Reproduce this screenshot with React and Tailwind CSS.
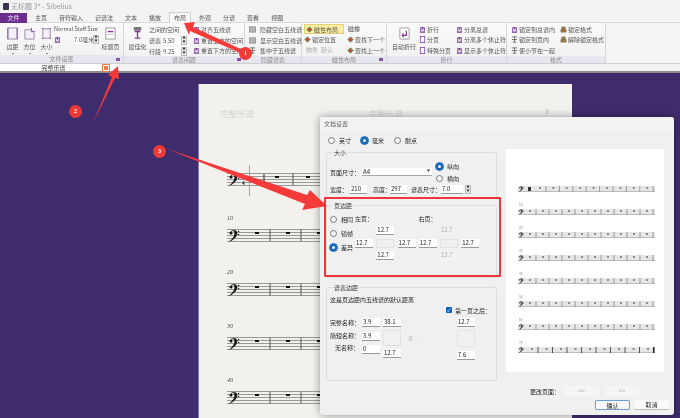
import React from 'react';

const FONT = '"Noto Sans CJK SC", "Noto Sans", sans-serif';

// little purple ribbon glyph, shape varies a bit by kind
const Glyph = ({ kind = 'a', className = 'w-[7px] h-[7px]' }) => (
  <svg viewBox="0 0 8 8" className={className + ' shrink-0'}>
    {kind === 'a' && <path d="M1 7h6M2 6V2h4v4M4 1v3" stroke="#7a3f98" strokeWidth="1.2" fill="none" />}
    {kind === 'b' && <rect x="1.5" y="0.5" width="5" height="7" fill="#fff" stroke="#8a4fa8" />}
    {kind === 'c' && <rect x="0.5" y="1" width="7" height="6" fill="#b4b4b4" stroke="#999" />}
    {kind === 'd' && <path d="M1 4l3-3 3 3-3 3z" fill="#d9433a" stroke="#3f9a45" />}
    {kind === 'e' && <path d="M2 1h4v3H2zM1 4h6v3H1z" fill="#a8772e" stroke="#6d6d6d" strokeWidth="0.6" />}
    {kind === 'f' && <path d="M1 1h6M4 1v6M2 7h4M1 4h6" stroke="#666" strokeWidth="1" fill="none" />}
  </svg>
);

const BigIcon = ({ kind }) => (
  <svg viewBox="0 0 14 14" className="w-[13px] h-[13px]">
    {kind === 'page' && <g><rect x="2" y="1" width="10" height="12" fill="#f4eef7" stroke="#9a8aa8" /><path d="M2 1v12M12 1v12" stroke="#8a4fa8" /></g>}
    {kind === 'fold' && <g><path d="M2 3h7l3 3v7H2z" fill="#f4eef7" stroke="#9a8aa8" /><path d="M9 1v4h4" stroke="#8a4fa8" fill="none" /></g>}
    {kind === 'size' && <g><rect x="3" y="2" width="8" height="10" fill="#f4eef7" stroke="#9a8aa8" /><path d="M3 1v1M11 1v1M3 12v1M11 12v1" stroke="#8a4fa8" strokeWidth="2" /></g>}
    {kind === 'title' && <g><rect x="2" y="1" width="10" height="12" fill="#fff" stroke="#9a9a9a" /><path d="M4 5h6" stroke="#8a2f9a" strokeWidth="1.4" /><path d="M4 8h6" stroke="#bbb" /></g>}
    {kind === 'opt' && <g><rect x="3" y="0" width="8" height="4" fill="#777" /><path d="M4 5h6M7 5v6M4 12h6" stroke="#8a2f9a" strokeWidth="1.4" /></g>}
    {kind === 'wrap' && <g><rect x="2" y="1" width="10" height="12" rx="1" fill="#fff" stroke="#9a9a9a" /><path d="M9 4v5H5M6 7L4.5 9 6 11" stroke="#8a2f9a" strokeWidth="1.2" fill="none" /></g>}
  </svg>
);

const BigBtn = ({ icon, label, arrow }) => (
  <div className="flex flex-col items-center w-[17px] pt-[3px]">
    <BigIcon kind={icon} />
    <span className="mt-[3px] whitespace-nowrap leading-[8px]">{label}</span>
    {arrow && <span className="mt-[2px] w-[2px] h-[1px] bg-[#888]" />}
  </div>
);

const RowItem = ({ kind, children, className = '' }) => (
  <div className={'flex items-center gap-[1px] h-[10.5px] whitespace-nowrap ' + className}>
    <Glyph kind={kind} />
    <span>{children}</span>
  </div>
);

const Launcher = () => <span className="absolute right-[3px] bottom-[2px] w-[4px] h-[3px] bg-[#8a4fa8]" />;

const Group = ({ width, label, launcher, children, pl = 'pl-[4px]' }) => (
  <div className="relative flex flex-col shrink-0 border-r border-[#d4d6dc]" style={{ width }}>
    <div className={'flex h-[33px] bg-gradient-to-b from-[#fafafa] to-[#f2f2f3] pt-[1px] ' + pl}>{children}</div>
    <div className="h-[8px] bg-[#e6e7ee] text-[#8a8a8a] text-center leading-[7px]">{label}</div>
    {launcher && <Launcher />}
  </div>
);

const Stepper = () => (
  <span className="w-[6px] h-[9px] bg-[#e8e8e8] border border-[#bbb] flex flex-col items-center justify-between text-[3px] leading-[3px] text-[#222]">
    <span>▲</span>
    <span>▼</span>
  </span>
);

const TABS = ['主页', '音符输入', '记谱法', '文本', '播放'];
const TABS2 = ['外观', '分谱', '查看', '视图'];

const Ribbon = () => (
  <div className="text-[6px] text-[#555] bg-[#f4f4f5]">
    <div className="flex h-[13px] items-center pl-[3px] gap-[2px] bg-[#f3f3f3] text-[#9a9a9a]">
      <span className="w-[6px] h-[7px] bg-[#3c2f52] rounded-[1px]" />
      <span className="text-[7px]">无标题 3* - Sibelius</span>
    </div>
    <div className="flex h-[10px] items-center bg-[#f3f3f3] text-[#555] leading-[8px]">
      <span className="w-[27px] h-[10px] bg-[#6b2c8c] text-[#e9def0] text-center leading-[9px]">文件</span>
      <div className="flex gap-[12px] pl-[8px]">
        {TABS.map((t) => <span key={t}>{t}</span>)}
      </div>
      <span className="ml-[8px] w-[22px] h-[11px] -mt-[1px] bg-[#f9f9f9] border border-b-0 border-[#d0d0d0] text-center leading-[10px] whitespace-nowrap">布局</span>
      <div className="flex gap-[12px] pl-[8px]">
        {TABS2.map((t) => <span key={t}>{t}</span>)}
      </div>
    </div>
    <div className="flex h-[41px] border-t border-[#d8d8d8] -mt-px">
      <Group width={124} label="文件设置" launcher>
        <div className="flex gap-0 pl-0">
          <BigBtn icon="page" label="边距" arrow />
          <BigBtn icon="fold" label="方位" arrow />
          <BigBtn icon="size" label="大小" arrow />
        </div>
        <div className="flex flex-col ml-[-1px] pt-[1px] w-[48px]">
          <span className="whitespace-nowrap leading-[9px] text-[5.5px]">Normal Staff Size</span>
          <div className="flex items-center mt-[1px]">
            <Glyph kind="a" />
            <span className="ml-[13px] w-[19px] bg-white text-center leading-[9px] whitespace-nowrap">7.0毫米</span>
            <Stepper />
          </div>
        </div>
        <BigBtn icon="title" label="标题页" />
      </Group>
      <Group width={121} label="谱表间距" launcher pl="pl-[5px]">
        <BigBtn icon="opt" label="最佳化" />
        <div className="flex flex-col ml-[3px] pt-[1px] gap-[2px] w-[44px]">
          <span className="leading-[9px]">之间的空间</span>
          {[['谱表', '5.50'], ['行段', '9.25']].map(([a, b]) => (
            <div key={a} className="flex items-center h-[9px]">
              <span className="w-[13px]">{a}</span>
              <span className="w-[19px] bg-white pl-[1px] leading-[9px]">{b}</span>
              <Stepper />
            </div>
          ))}
        </div>
        <div className="flex flex-col pt-[0.5px]">
          <RowItem kind="a">对齐五线谱</RowItem>
          <RowItem kind="a">重置上方的空间</RowItem>
          <RowItem kind="a">重置下方的空间</RowItem>
        </div>
      </Group>
      <Group width={57} label="隐藏谱表">
        <div className="flex flex-col pt-[0.5px]">
          <RowItem kind="c" className="gap-[4px]">隐藏空白五线谱</RowItem>
          <RowItem kind="c" className="gap-[4px]">显示空白五线谱</RowItem>
          <RowItem kind="f" className="gap-[4px]">集中于五线谱</RowItem>
        </div>
      </Group>
      <Group width={85} label="磁性布局" launcher pl="pl-[2px]">
        <div className="flex flex-col w-[43px]">
          <div className="flex items-center gap-[1px] h-[10px] w-[40px] bg-[#fdeea0] border border-[#e6cf7a] pl-[1px]">
            <Glyph kind="d" />
            <span className="whitespace-nowrap">磁性布局</span>
          </div>
          <RowItem kind="d">锁定位置</RowItem>
          <div className="flex items-center gap-[3px] h-[10px] text-[#aaa] pl-[2px] whitespace-nowrap">
            <span>物件</span>
            <span>默认</span>
          </div>
        </div>
        <div className="flex flex-col">
          <span className="h-[10.5px] pl-[1px] leading-[10px]">磁撞</span>
          <RowItem kind="d">查找下一个</RowItem>
          <RowItem kind="d">查找上一个</RowItem>
        </div>
      </Group>
      <Group width={120} label="折行" pl="pl-[5px]">
        <div className="w-[24px] flex justify-center">
          <BigBtn icon="wrap" label="自动折行" />
        </div>
        <div className="flex flex-col ml-[3px] w-[37px]">
          <RowItem kind="a">折行</RowItem>
          <RowItem kind="b">分页</RowItem>
          <RowItem kind="b">特殊分页</RowItem>
        </div>
        <div className="flex flex-col">
          <RowItem kind="a">分离总谱</RowItem>
          <RowItem kind="a">分离多个休止符</RowItem>
          <RowItem kind="a">显示多个休止符</RowItem>
        </div>
      </Group>
      <Group width={99} label="格式">
        <div className="flex flex-col w-[49px]">
          <RowItem kind="a">锁定到总谱内</RowItem>
          <RowItem kind="f">锁定到页内</RowItem>
          <RowItem kind="f">使小节在一起</RowItem>
        </div>
        <div className="flex flex-col">
          <RowItem kind="e">锁定格式</RowItem>
          <RowItem kind="e">解除锁定格式</RowItem>
        </div>
      </Group>
    </div>
    <div className="flex h-[10px] border-t border-[#cfcfcf] border-b-2 border-b-[#8d8d8d] bg-[#f2f2f2]">
      <div className="relative w-[119px] bg-white text-center text-[#333] leading-[8px] pr-[12px]">
        完整乐谱
        <span className="absolute left-[103px] top-[1px] w-[6px] h-[6px] bg-[#ea7a4a] border border-white outline outline-[#ea7a4a]" />
      </div>
    </div>
  </div>
);

const Clef = ({ x = 0, y = 0, s = 1 }) => (
  <g transform={`translate(${x} ${y}) scale(${s})`}>
    <path d="M1 4.5C1 1.5 7-.5 8 3.5 8.6 7.5 4 11 0.5 12.5 4 9.5 6 7 5.6 3.6 5.2.8 2.4 1.6 2.4 3.4" fill="#111" stroke="#111" strokeWidth="0.4" />
    <circle cx="2" cy="4.2" r="1.3" fill="#111" />
    <circle cx="9.6" cy="2.4" r="0.7" fill="#111" />
    <circle cx="9.6" cy="5.4" r="0.7" fill="#111" />
  </g>
);

// staff on the big score page
const PageStaff = ({ number, first }) => (
  <div className={first ? 'relative h-[56px]' : 'relative h-[54px]'}>
    {number && <i className="absolute left-0 top-[-15px] text-[6px] leading-[8px] text-[#444] font-['Liberation_Serif',serif]">{number}</i>}
    <svg width="345" height="14" viewBox="0 0 345 14" className="block">
      {[0, 3, 6, 9, 12].map((y) => <line key={y} x1="0" x2="345" y1={y + 0.5} y2={y + 0.5} stroke="#9a9896" />)}
      <Clef x={2} y={0} />
      {first && <text x="15" y="5.5" fontSize="5.5" fontWeight="700" fill="#111" fontFamily="Liberation Serif">4</text>}
      {first && <text x="15" y="11.5" fontSize="5.5" fontWeight="700" fill="#111" fontFamily="Liberation Serif">4</text>}
      {first && <line x1="37" x2="37" y1="1" y2="9" stroke="#222" />}
      {first && <ellipse cx="35.5" cy="9" rx="1.8" ry="1.3" fill="#222" />}
      {[0, 1, 2, 3].map((i) => {
        const bar = first ? 66 + i * 31 : 43 + i * 31;
        const rest = first ? 48 : 28;
        return (
          <g key={i}>
            <line x1={bar} x2={bar} y1="0.5" y2="12.5" stroke="#555" />
            <rect x={rest + i * 31} y="3" width="4" height="2" fill="#111" />
          </g>
        );
      })}
    </svg>
  </div>
);

const ScorePage = () => (
  <div className="absolute left-[198px] top-[11px] w-[374px] h-[340px] bg-[#f3f1ee] border-l border-[#7f78a8] pl-[28px]">
    <div className="flex h-[89px] pt-[23px] -ml-[7px] text-[8.5px] text-[#d6d4d0] gap-[115px] leading-[12px]">
      <span>完整乐谱</span>
      <span>完整乐谱</span>
    </div>
    <PageStaff first />
    <PageStaff number="10" />
    <PageStaff number="20" />
    <PageStaff number="30" />
    <PageStaff number="40" />
    <span className="absolute left-[347px] top-[25px] w-[2px] h-[5px] bg-[#d4d2ce]" />
    <span className="absolute left-[50px] top-[81px] w-[1px] h-[31px] bg-[#8fb08f]" />
  </div>
);

const Radio = ({ on, children, className = '' }) => (
  <label className={'flex items-center gap-[4px] whitespace-nowrap ' + className}>
    {on ? (
      <span className="w-[7px] h-[7px] rounded-full bg-white border-[2px] border-[#0a62b8] outline outline-[0.5px] outline-[#0a62b8]" />
    ) : (
      <span className="w-[7px] h-[7px] rounded-full bg-[#f8f8f8] border border-[#777]" />
    )}
    <span>{children}</span>
  </label>
);

const Field = ({ children, w = 'w-[18px]', h = 'h-[9px]', disabled, className = '' }) => (
  <span className={`${w} ${h} block pl-[1px] leading-[8px] whitespace-nowrap ${disabled ? 'bg-[#f2f2f2] text-[#aaa]' : 'bg-white border-b border-[#999]'} ${className}`}>
    {children}
  </span>
);

const EmptyBox = ({ h = 'h-[10px]' }) => <span className={`w-[18px] ${h} block bg-[#f0f0f0] border border-[#e2e2e2] rounded-[1px]`} />;

const MarginCross = ({ disabled }) => (
  <div className="grid grid-cols-[18px_18px_18px] gap-x-[3.3px] gap-y-[3.5px]">
    <span />
    <Field disabled={disabled}>12.7</Field>
    <span />
    <Field>12.7</Field>
    <EmptyBox h="h-[9px]" />
    <Field>12.7</Field>
    <span />
    <Field disabled={disabled}>12.7</Field>
    <span />
  </div>
);

const GroupBox = ({ title, className = '', children }) => (
  <fieldset className={'border border-[#dedede] rounded-[2px] ' + className}>
    <legend className="ml-[3px] px-[1px] leading-[7px] text-[#333]">{title}</legend>
    {children}
  </fieldset>
);

const PreviewStaff = ({ number, first, last }) => (
  <div className="relative h-[23px]">
    {number && <span className="absolute left-[1px] top-[-6px] text-[3px] leading-[4px] text-[#888]">{number}</span>}
    <svg width="137" height="6" viewBox="0 0 137 6" className="block">
      <rect width="137" height="6" fill="#e6e6e6" />
      <line x1="0" x2="137" y1="5.5" y2="5.5" stroke="#bdbdbd" />
      <Clef x={1} y={0} s={0.45} />
      {Array.from({ length: first ? 9 : last ? 9 : 10 }).map((_, i) => {
        const step = first ? 13.4 : last ? 14.5 : 13;
        const start = first ? 28 : last ? 20 : 18;
        return (
          <g key={i}>
            <line x1={start + i * step} x2={start + i * step} y1="0" y2="6" stroke={last ? '#555' : '#999'} />
            <rect x={start + i * step - 7} y="1.5" width="2" height="1" fill="#333" />
          </g>
        );
      })}
      {first && <rect x="10" y="1" width="3" height="4" fill="#333" />}
      {last && <rect x="135" y="0" width="1.2" height="6" fill="#222" />}
    </svg>
  </div>
);

const Dialog = () => (
  <div className="absolute left-[320px] top-[44px] w-[354px] h-[298px] rounded-[3px] bg-[#f0f0f0] shadow-[0_0_9px_rgba(0,0,0,0.4)] text-[6px] text-[#222] flex flex-col">
    <div className="h-[14px] shrink-0 bg-[#f3f3f3] rounded-t-[3px] pl-[4px] pt-[1.5px] leading-[9px] text-[#666]">文档设置</div>
    <div className="flex flex-1 pl-[6px]">
      <div className="w-[171px] shrink-0 flex flex-col">
        <div className="flex gap-[10px] h-[18px] items-center pl-[2px] shrink-0">
          <Radio>英寸</Radio>
          <Radio on>毫米</Radio>
          <Radio>耐点</Radio>
        </div>
        <GroupBox title="大小" className="h-[50px] pl-[3px]">
          <div className="flex items-center h-[24px] pt-[8px]">
            <span className="w-[32px] whitespace-nowrap">页面尺寸：</span>
            <span className="w-[70px] h-[8px] bg-white border-b border-[#aaa] flex justify-between items-center pl-[1px] pr-[2px] leading-[7px]">
              A4
              <span className="text-[3px] text-[#222]">▼</span>
            </span>
            <div className="flex flex-col gap-[3px] ml-[4px]">
              <Radio on>纵向</Radio>
              <Radio>横向</Radio>
            </div>
          </div>
          <div className="flex items-center h-[11px] mt-[4px]">
            <span className="w-[20px] whitespace-nowrap">宽度：</span>
            <Field w="w-[17px]">210</Field>
            <span className="ml-[6px] w-[17px] whitespace-nowrap">高度：</span>
            <Field w="w-[17px]">297</Field>
            <span className="ml-[4px] w-[30px] whitespace-nowrap">谱表尺寸：</span>
            <Field w="w-[22px]">7.0</Field>
            <span className="ml-[2px]"><Stepper /></span>
          </div>
        </GroupBox>
        <GroupBox title="页边距" className="h-[76px] mt-[3px] pl-[3px]">
          <div className="flex pt-[6px]">
            <div className="flex flex-col gap-[5px] w-[25px]">
              <Radio className="gap-[2px]">相同</Radio>
              <Radio className="gap-[2px]">镜帧</Radio>
              <Radio on className="gap-[2px]">差异</Radio>
            </div>
            <div className="flex gap-[3px]">
              <div className="flex flex-col">
                <span className="h-[11px] leading-[7px]">左页：</span>
                <MarginCross />
              </div>
              <div className="flex flex-col">
                <span className="h-[11px] leading-[7px]">右页：</span>
                <MarginCross disabled />
              </div>
            </div>
          </div>
        </GroupBox>
        <GroupBox title="谱表边距" className="h-[97px] mt-[6px] pl-[3px]">
          <div className="leading-[8px] mt-[5px] whitespace-nowrap">这是页边距内五线谱的默认距离</div>
          <div className="flex justify-start mt-[2px] pl-[116px] h-[8px] items-center gap-[3px]">
            <span className="w-[6px] h-[6px] bg-[#0a62b8] rounded-[1px] text-white text-[5px] leading-[6px] text-center">✓</span>
            <span>第一页之后：</span>
          </div>
          <div className="flex mt-[4px]">
            <div className="flex flex-col gap-[4.5px] w-[32px] pt-[1px] leading-[8px]">
              <span>完整名称：</span>
              <span>简短名称：</span>
              <span className="pl-[5px]">无名称：</span>
            </div>
            <div className="flex flex-col gap-[4.5px] w-[21px]">
              <Field>3.9</Field>
              <Field>3.9</Field>
              <Field>0</Field>
            </div>
            <div className="flex flex-col gap-[3px] w-[24px]">
              <Field>38.1</Field>
              <EmptyBox h="h-[16px]" />
              <Field>12.7</Field>
            </div>
            <div className="w-[50px] pt-[17px]">
              <span className="block w-[15px] h-[7px] bg-[#eeeeee] pl-[2px] text-[#aaa] leading-[7px]">0</span>
            </div>
            <div className="flex flex-col gap-[3px]">
              <Field>12.7</Field>
              <EmptyBox h="h-[17px]" />
              <Field className="mt-[1px]">7.6</Field>
            </div>
          </div>
        </GroupBox>
      </div>
      <div className="flex-1 flex flex-col pl-[9px] pt-[18px]">
        <div className="w-[158px] h-[223px] bg-white pl-[12px] pt-[37px]">
          <PreviewStaff first />
          <PreviewStaff number="10" />
          <PreviewStaff number="20" />
          <PreviewStaff number="30" />
          <PreviewStaff number="40" />
          <PreviewStaff number="50" />
          <PreviewStaff number="60" />
          <PreviewStaff number="70" last />
        </div>
        <div className="flex items-center gap-[8px] mt-[14px] pl-[24px] h-[10px]">
          <span className="w-[26px] whitespace-nowrap">更改页面：</span>
          <span className="w-[35px] h-[10px] bg-[#f5f5f5] rounded-[1px] text-center text-[#aaa] leading-[9px]">&lt;&lt;</span>
          <span className="w-[34px] h-[10px] ml-[-2px] bg-[#f5f5f5] rounded-[1px] text-center text-[#aaa] leading-[9px]">&gt;&gt;</span>
        </div>
        <div className="flex gap-[4px] mt-[4px] pl-[89px]">
          <span className="w-[35px] h-[10px] bg-[#fafafa] border border-[#0a62b8]/60 rounded-[2px] text-center leading-[9px]">确认</span>
          <span className="w-[35px] h-[10px] bg-[#fafafa] border-b border-[#bbb] rounded-[2px] text-center leading-[9px]">取消</span>
        </div>
      </div>
    </div>
  </div>
);

const Badge = ({ className, children }) => (
  <span className={'absolute w-[13px] h-[13px] rounded-full bg-[#f03a38] text-white text-[6px] font-bold text-center leading-[13px] font-["Liberation_Serif",serif] ' + className}>
    {children}
  </span>
);

// red callouts sitting over the whole screenshot
const Annotations = () => (
  <>
    <svg width="680" height="418" viewBox="0 0 680 418" className="absolute inset-0">
      <polygon points="184,23 195,22 193,27 247,52 245,55 190,31 189,35" fill="#f43b39" />
      <polygon points="93,123 112,77 108,75 118,66 119,79 115,78" fill="#f43b39" />
      <polygon points="167,149 307,195 310,190 327,206 302,210 305,204" fill="#f43b39" />
    </svg>
    <span className="absolute left-[324px] top-[197px] w-[177px] h-[80px] border-2 border-[#f0383c] rounded-[1px]" />
    <Badge className="left-[239px] top-[47px]">1</Badge>
    <Badge className="left-[69px] top-[105px]">2</Badge>
    <Badge className="left-[153px] top-[145px]">3</Badge>
  </>
);

const App = () => (
  <div className="relative w-[680px] h-[418px] overflow-hidden flex flex-col blur-[0.4px]" style={{ fontFamily: FONT }}>
    <Ribbon />
    <div className="relative flex-1 bg-[#3f2c6c]">
      <ScorePage />
      <Dialog />
    </div>
    <Annotations />
  </div>
);

export default App;
